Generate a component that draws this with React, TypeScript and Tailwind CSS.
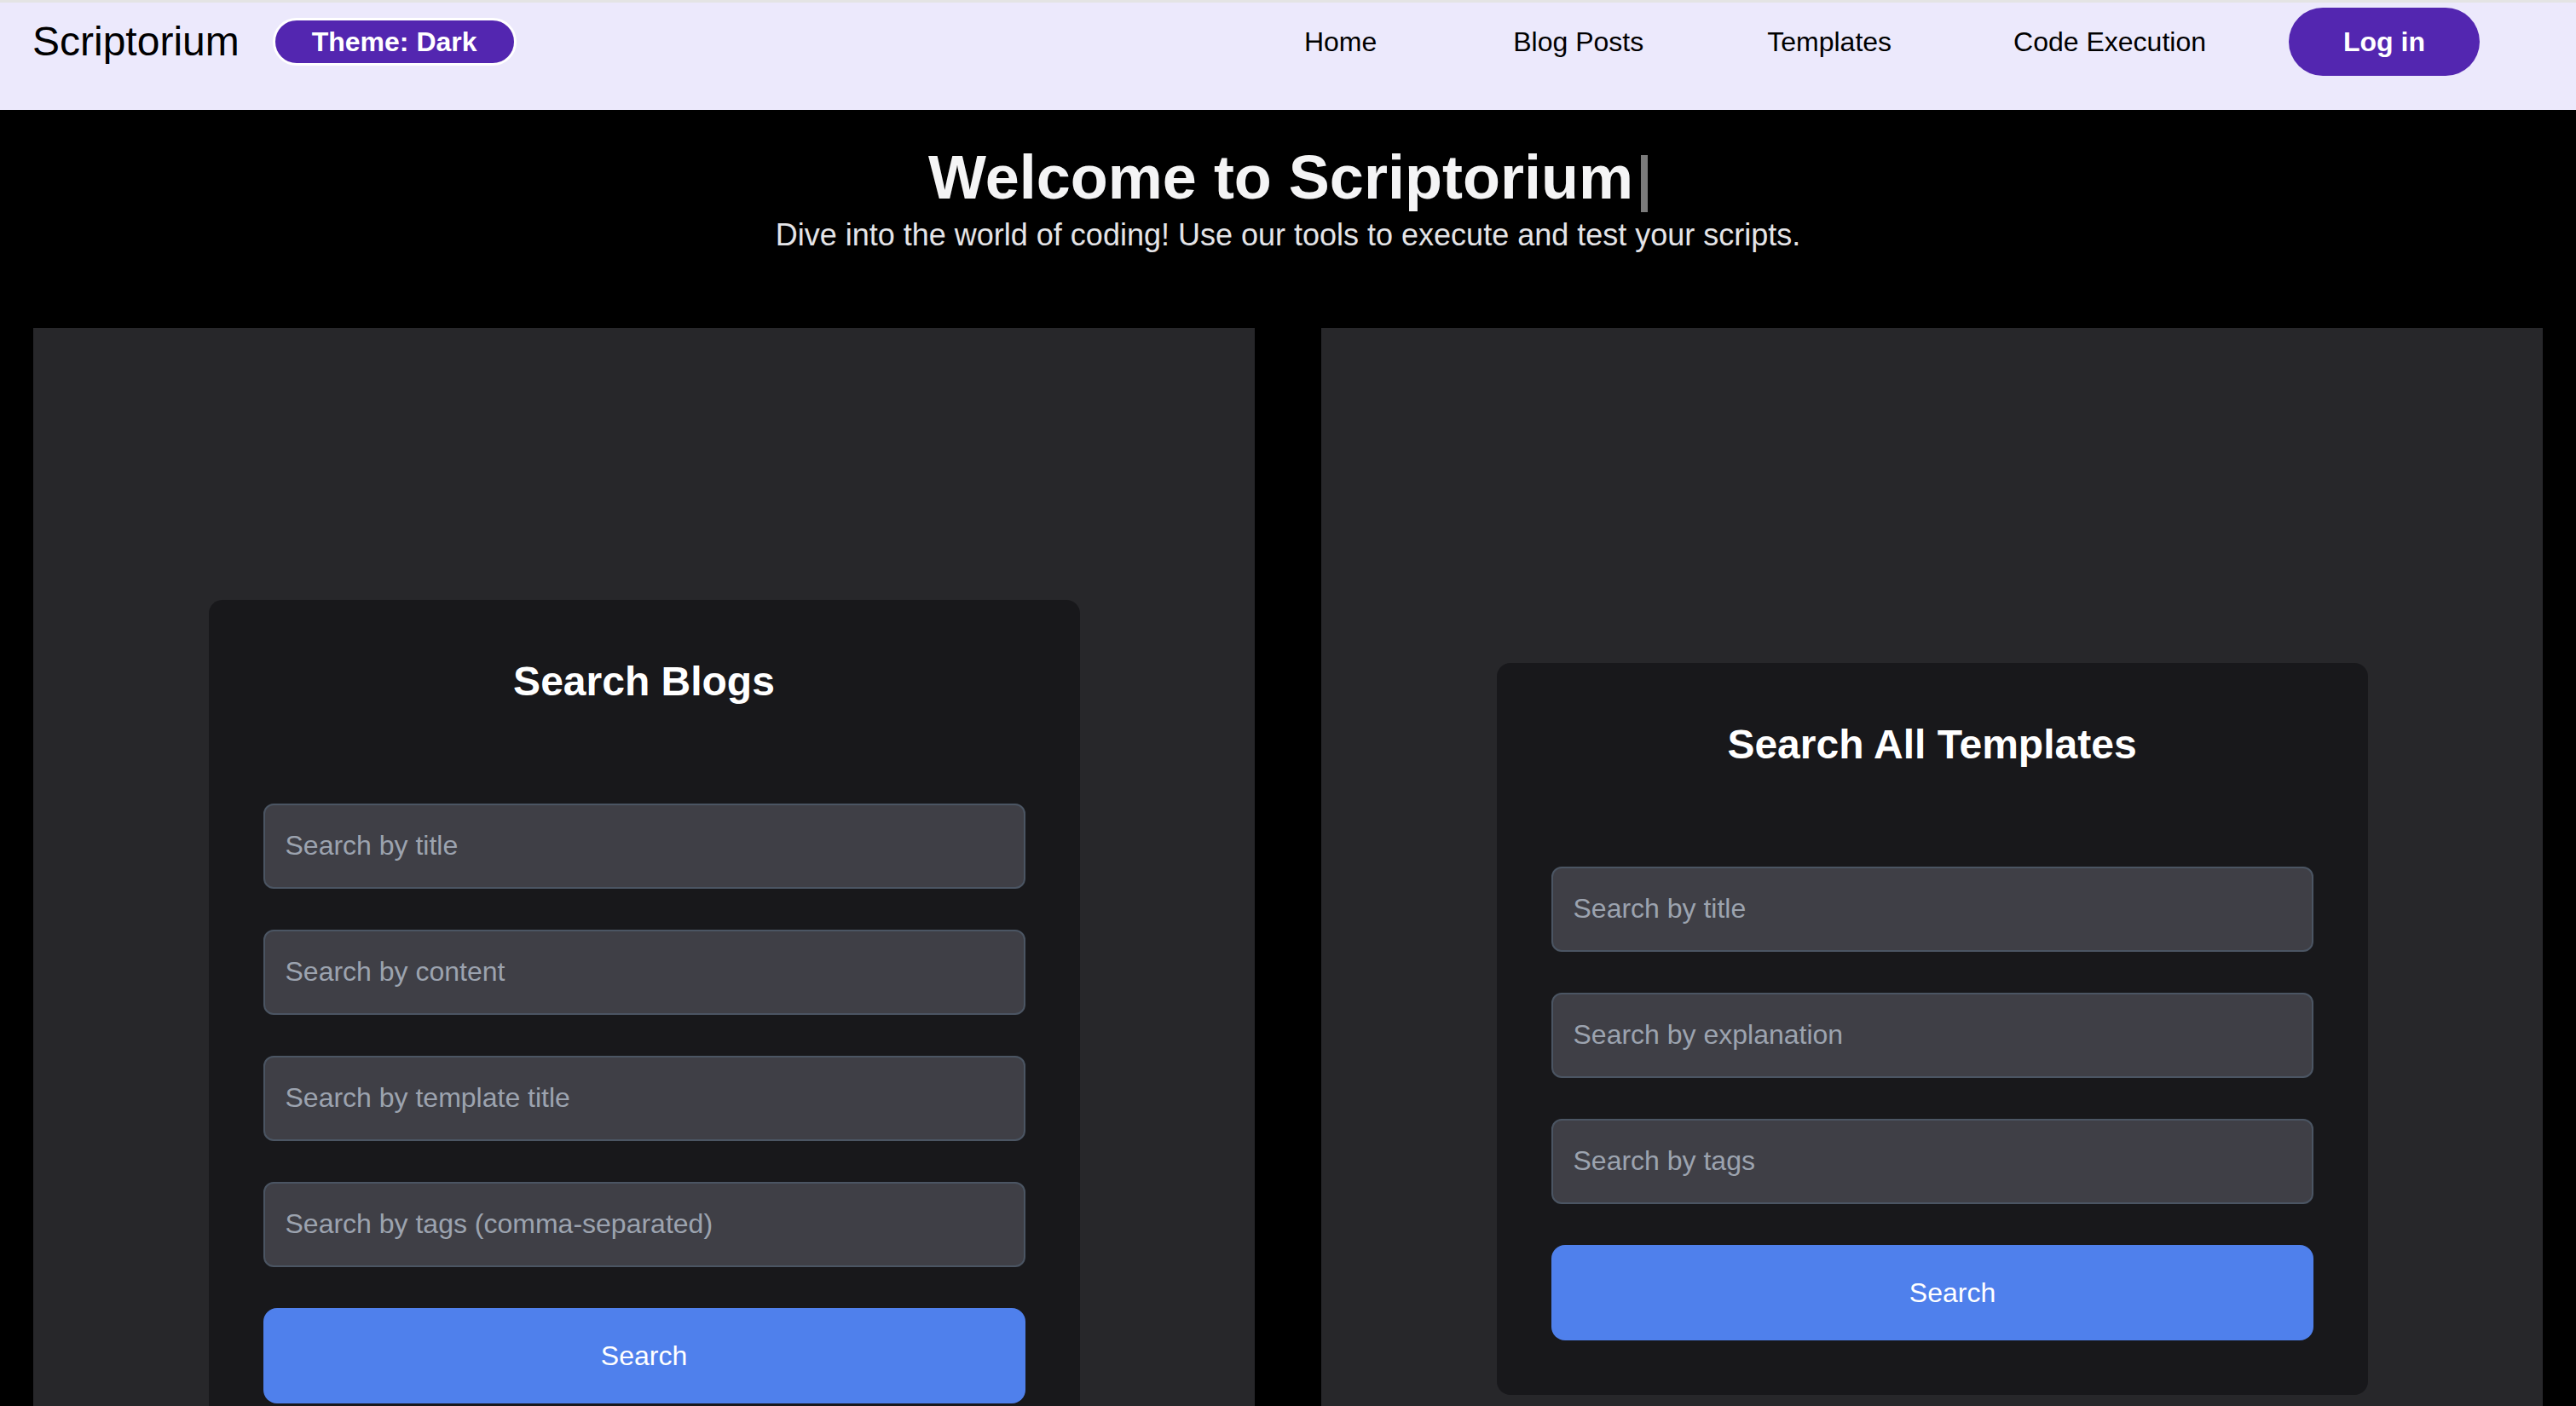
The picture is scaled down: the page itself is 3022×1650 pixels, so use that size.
import React from 'react';

const font = { fontFamily: '"Liberation Sans", Arial, sans-serif' };

const navLinks = [
  { label: 'Home', ml: '' },
  { label: 'Blog Posts', ml: 'ml-[160px]' },
  { label: 'Templates', ml: 'ml-[145px]' },
  { label: 'Code Execution', ml: 'ml-[143px]' },
];

const SearchInput: React.FC<{ placeholder: string }> = ({ placeholder }) => (
  <input
    type="text"
    placeholder={placeholder}
    className="h-[100px] w-full rounded-[12px] border-2 border-[#4b5563] bg-[#3f3f46] px-[24px] text-[32px] text-white outline-none placeholder:text-[#9ca3af]"
  />
);

const SearchCard: React.FC<{ title: string; fields: string[]; buttonClass?: string }> = ({
  title,
  fields,
  buttonClass = '',
}) => (
  <div className="w-[1022px] rounded-[16px] bg-[#18181b] p-[64px]">
    <h2 className="mb-[111px] text-center text-[48px] font-bold leading-[64px] text-white">{title}</h2>
    <form className="flex flex-col gap-[48px]" onSubmit={(e) => e.preventDefault()}>
      {fields.map((f) => (
        <SearchInput key={f} placeholder={f} />
      ))}
      <button
        type="submit"
        className={`h-[112px] w-full rounded-[16px] bg-[#4f80ec] text-[32px] text-white ${buttonClass}`}
      >
        Search
      </button>
    </form>
  </div>
);

export default function App() {
  return (
    <div className="min-h-screen bg-black" style={font}>
      {/* top bar */}
      <header className="border-t-[3px] border-[#e4e4e4] bg-[#ece9fc] pb-[40px] pl-[38px] pr-[113px] pt-[6px]">
        <div className="flex h-[80px] items-center">
          <span className="text-[48px] leading-none text-black">Scriptorium</span>
          <button className="ml-[39px] flex h-[56px] items-center rounded-full border-[3px] border-white bg-[#5326b0] px-[43px] text-[32px] font-bold text-white">
            Theme: Dark
          </button>
          <nav className="ml-auto flex items-center">
            {navLinks.map((l) => (
              <a key={l.label} className={`${l.ml} text-[32px] text-black`}>
                {l.label}
              </a>
            ))}
            <button className="ml-[97px] flex h-[80px] w-[224px] items-center justify-center rounded-full bg-[#5326b0] text-[32px] font-bold text-white">
              Log in
            </button>
          </nav>
        </div>
      </header>

      {/* hero */}
      <section className="pt-[43px] text-center">
        <h1 className="flex h-[72px] items-start justify-center text-[72px] font-bold leading-none text-[#f4f4f5]">
          <span>Welcome to Scriptorium</span>
          <span className="ml-[9px] mt-[10px] inline-block h-[67px] w-[8px] bg-[#7b7b7b]" />
        </h1>
        <p className="mt-[5px] text-[36px] leading-[54px] text-[#e4e4e7]">
          Dive into the world of coding! Use our tools to execute and test your scripts.
        </p>
      </section>

      {/* search panels */}
      <main className="mt-[82px] grid grid-cols-2 gap-[78px] px-[39px]">
        <div className="flex h-[1644px] items-center justify-center bg-[#27272a]">
          <SearchCard
            title="Search Blogs"
            fields={[
              'Search by title',
              'Search by content',
              'Search by template title',
              'Search by tags (comma-separated)',
            ]}
          />
        </div>
        <div className="flex h-[1644px] items-center justify-center bg-[#27272a]">
          <SearchCard
            title="Search All Templates"
            fields={['Search by title', 'Search by explanation', 'Search by tags']}
            buttonClass="pl-[48px]"
          />
        </div>
      </main>
    </div>
  );
}
